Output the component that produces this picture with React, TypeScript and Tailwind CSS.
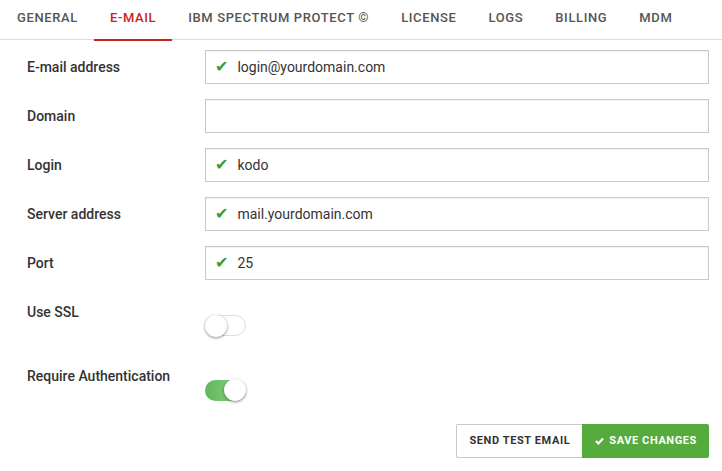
import React from "react";

const tabs = ["GENERAL", "E-MAIL", "IBM SPECTRUM PROTECT ©", "LICENSE", "LOGS", "BILLING", "MDM"];

function Check() {
  return (
    <span className="text-[#3f9c2c] text-[16px] leading-none mr-[9px]" style={{ fontFamily: '"DejaVu Sans", sans-serif' }}>
      ✔
    </span>
  );
}

function Field({ label, value }: { label: string; value?: string }) {
  return (
    <div className="flex items-center h-[34px] mb-[15px]">
      <div className="w-[178px] text-[14px] font-medium text-[#333]">{label}</div>
      <div className="w-[504px] h-[34px] border border-[#c9c9c9] bg-white shadow-[inset_0_1px_1px_rgba(0,0,0,0.06)] flex items-center pl-[9px] text-[14px] text-[#333]">
        {value !== undefined && (
          <>
            <Check />
            <span>{value}</span>
          </>
        )}
      </div>
    </div>
  );
}

function Toggle({ on }: { on: boolean }) {
  if (on) {
    return (
      <div className="relative w-[41px] h-[21px] rounded-full bg-gradient-to-r from-[#5fb85a] to-[#8fd38a]">
        <div className="absolute right-0 top-[-1px] w-[22px] h-[22px] rounded-full bg-white shadow-[0_1px_3px_rgba(0,0,0,0.45)]" />
      </div>
    );
  }
  return (
    <div className="relative w-[41px] h-[21px] rounded-full bg-white border border-[#dcdcdc]">
      <div className="absolute left-[-1px] top-[-1px] w-[22px] h-[22px] rounded-full bg-white shadow-[0_1px_3px_rgba(0,0,0,0.45)]" />
    </div>
  );
}

function ToggleRow({ label, on, labelPad, togglePad, className }: { label: string; on: boolean; labelPad: string; togglePad: string; className?: string }) {
  return (
    <div className={"flex " + (className ?? "")}>
      <div className={"w-[178px] text-[14px] font-medium text-[#333] leading-[20px] " + labelPad}>{label}</div>
      <div className={togglePad}>
        <Toggle on={on} />
      </div>
    </div>
  );
}

export default function App() {
  return (
    <div className="w-[722px] h-[471px] bg-white" style={{ fontFamily: 'Roboto, "Liberation Sans", sans-serif' }}>
      <div className="flex h-[40px] border-b border-[#dedede] pl-[1px]">
        {tabs.map((t) => {
          const active = t === "E-MAIL";
          return (
            <div
              key={t}
              className={
                "px-4 h-[41px] flex items-center pb-[4px] text-[13px] font-medium tracking-[0.62px] " +
                (active ? "text-[#c9231c] border-b-2 border-[#c9231c]" : "text-[#555] border-b-2 border-transparent")
              }
            >
              {t}
            </div>
          );
        })}
      </div>
      <div className="pl-[27px] pt-[10px]">
        <Field label="E-mail address" value="login@yourdomain.com" />
        <Field label="Domain" />
        <Field label="Login" value="kodo" />
        <Field label="Server address" value="mail.yourdomain.com" />
        <Field label="Port" value="25" />
        <div>
          <ToggleRow label="Use SSL" on={false} labelPad="pt-[7px]" togglePad="pt-[20px]" className="mb-[24px]" />
          <ToggleRow label="Require Authentication" on={true} labelPad="pt-[6px]" togglePad="pt-[20px]" />
        </div>
        <div className="flex justify-end w-[682px] mt-[23px]">
          <button className="h-[34px] px-[12px] border border-[#c9c9c9] border-r-0 rounded-l-[2px] bg-white text-[11px] font-bold tracking-[0.6px] text-[#333]">
            SEND TEST EMAIL
          </button>
          <button className="h-[34px] pl-[13px] pr-[12px] rounded-r-[2px] bg-[#55ab3b] text-[11px] font-bold tracking-[0.6px] text-white flex items-center gap-[5px]">
            <svg width="9" height="8" viewBox="0 0 10 9">
              <path d="M1 4.6 L3.8 7.3 L9 1.6" stroke="white" strokeWidth="2.4" fill="none" />
            </svg>
            SAVE CHANGES
          </button>
        </div>
      </div>
    </div>
  );
}
